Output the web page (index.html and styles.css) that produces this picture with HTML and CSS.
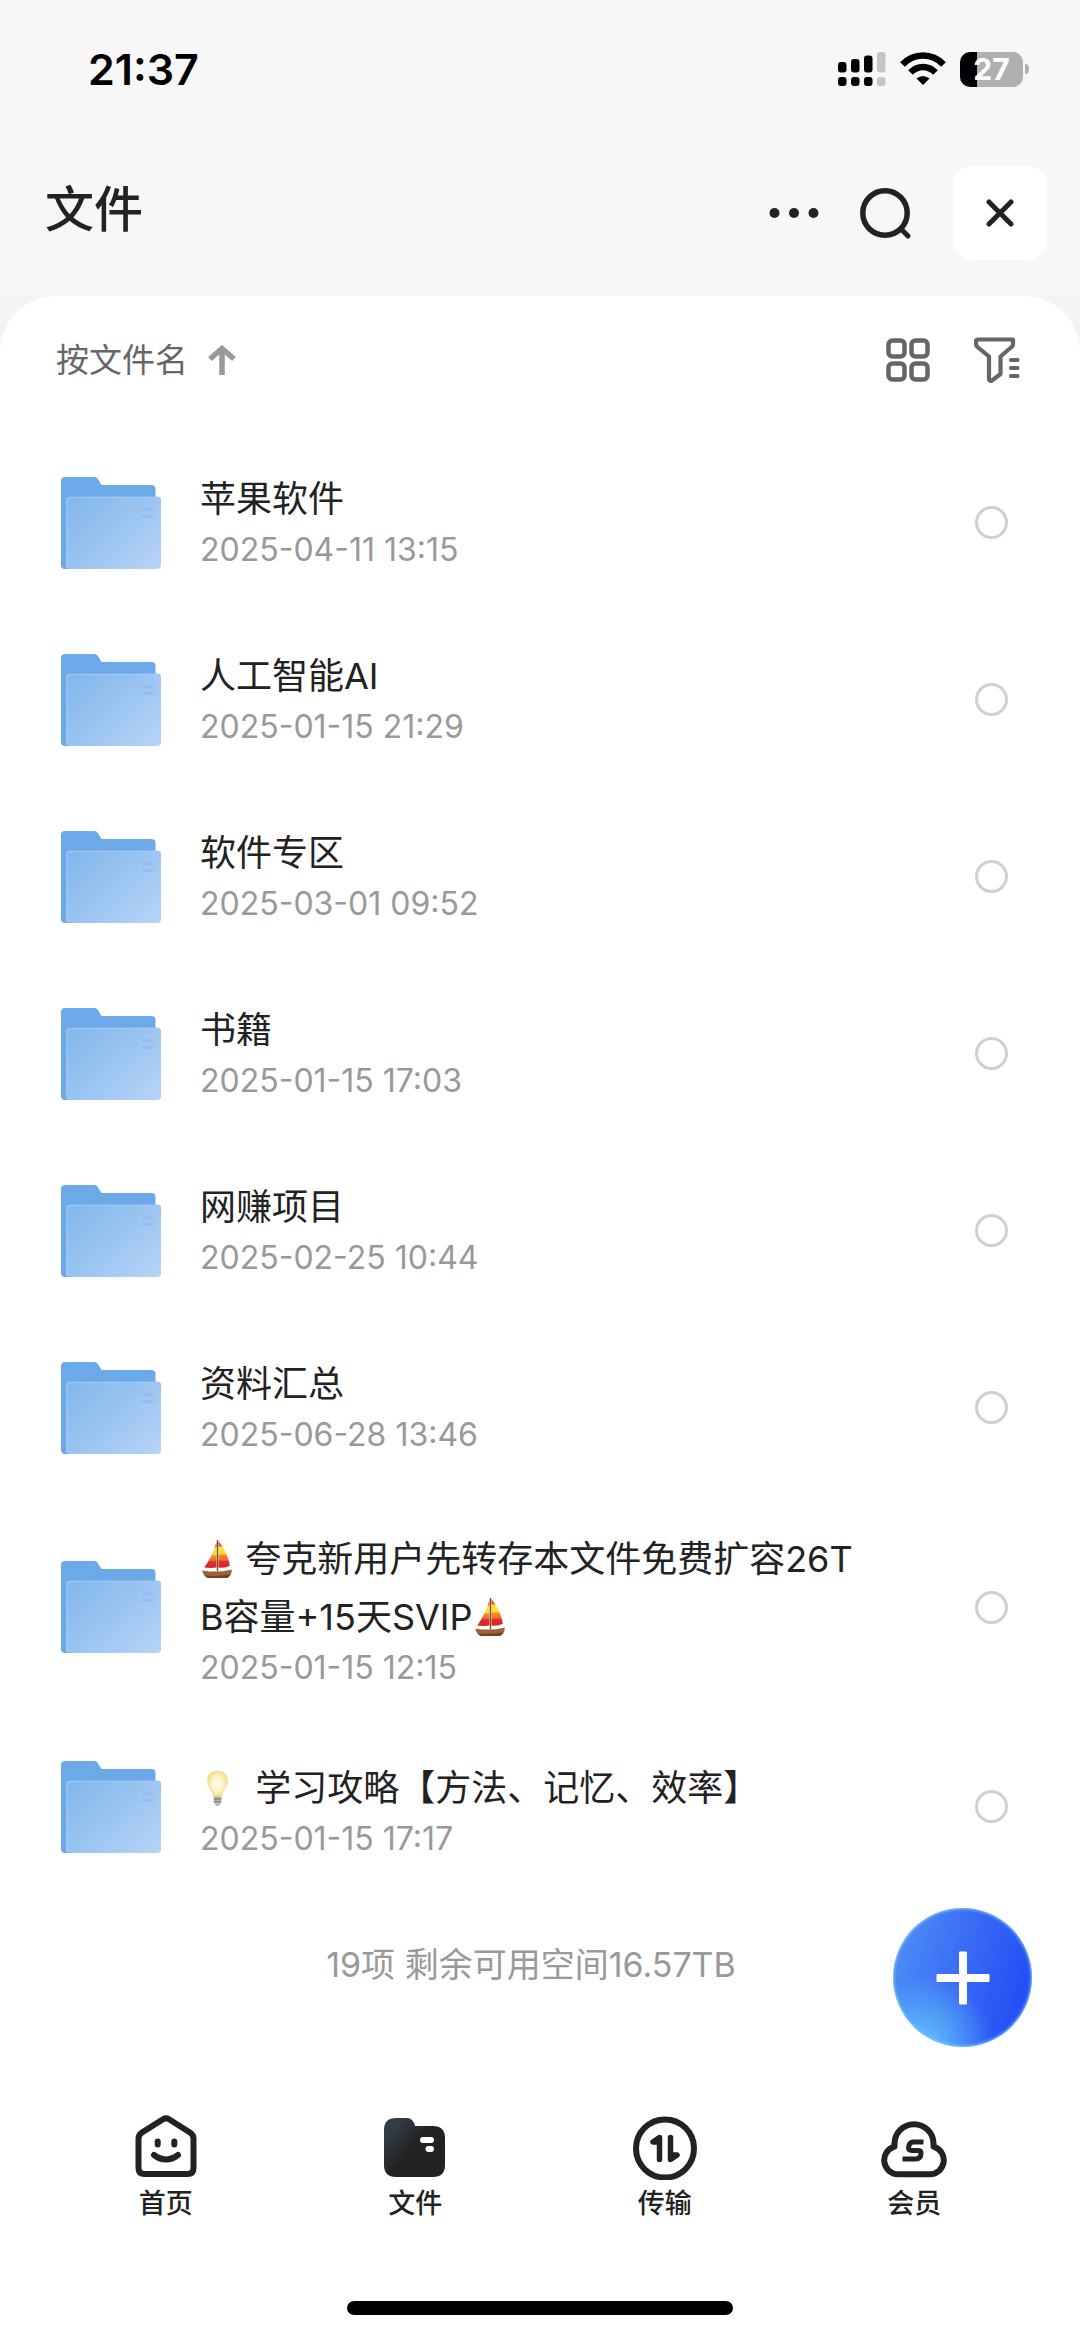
FILE: index.html
```html
<!DOCTYPE html>
<html lang="zh-CN">
<head>
<meta charset="utf-8">
<meta name="viewport" content="width=device-width, initial-scale=1">
<title>文件</title>
<link rel="stylesheet" href="styles.css">
</head>
<body>
<svg class="defs" aria-hidden="true">
  <defs>
    <linearGradient id="folder-front" x1="0" y1="0.1" x2="1" y2="0.9">
      <stop offset="0" stop-color="#83b8ec"/><stop offset="0.45" stop-color="#98c3f0"/><stop offset="1" stop-color="#b5d2f7"/>
    </linearGradient>
    <linearGradient id="nav-folder" x1="0" y1="0" x2="0.7" y2="0.6">
      <stop offset="0" stop-color="#353e47"/><stop offset="0.25" stop-color="#333b43"/><stop offset="0.75" stop-color="#222"/>
    </linearGradient>
    <linearGradient id="sail" x1="0" y1="0" x2="0" y2="1">
      <stop offset="0" stop-color="#e8402a"/><stop offset="0.18" stop-color="#ee5a3a"/><stop offset="0.24" stop-color="#ffe838"/><stop offset="0.48" stop-color="#fdd835"/><stop offset="0.54" stop-color="#f4892b"/><stop offset="0.7" stop-color="#f0702b"/><stop offset="0.76" stop-color="#e0302a"/><stop offset="1" stop-color="#d81f2a"/>
    </linearGradient>
    <radialGradient id="glow">
      <stop offset="0" stop-color="#fffdf0"/><stop offset="0.5" stop-color="#fff6cc"/><stop offset="1" stop-color="#f6dc8c"/>
    </radialGradient>
    <symbol id="folder" viewBox="0 0 100 92">
      <path fill="#6ba9e8" d="M4 0h29q3 0 4.500 3l3 5h50q4 0 4 4V92H4q-4 0-4-4V4q0-4 4-4z"/>
      <rect x="5" y="19.500" width="95" height="72.500" rx="4" fill="url(#folder-front)"/>
      <path d="M6 91V23.500q0-3 3-3h88q2 0 2.500 2" fill="none" stroke="#a0c8f2" stroke-width="1.200"/>
      <path d="M81 32.500h11M81 39.500h11" stroke="#93bbec" stroke-width="2.500"/>
    </symbol>
    <symbol id="boat" viewBox="0 0 36 40">
      <path fill="url(#sail)" d="M17 2Q12 18 4 29q7 1 13 0z"/>
      <path fill="url(#sail)" d="M19 1q10 12 12 26-5 3-12 2z"/>
      <path stroke="#75543a" stroke-width="1.500" d="M18 0v33"/>
      <path fill="#9b6338" d="M2 32q16 3 31-1 0 7-5 9H8q-5-2-6-8z"/>
      <path fill="#6e4224" d="M5 37q12 2 26-1-1 3-3 4H8q-2-1-3-3z"/>
    </symbol>
    <symbol id="bulb" viewBox="0 0 36 40">
      <path fill="url(#glow)" stroke="#f0dfa8" d="M18 2C11 2 7.500 6.500 7.500 12.500c0 7 5.500 9.500 6 16.500h9c.5-7 6-9.500 6-16.500C28.500 6.500 25 2 18 2z"/>
      <path fill="#b9b9b9" d="M14 29h8v6l-2.500 4h-3L14 35z"/>
      <path d="M14 31.500h8M14 34.500h8" stroke="#777" stroke-width="1.200"/>
    </symbol>
  </defs>
</svg>

<div class="app">
  <div class="status">
    <time class="clock">21:37</time>
    <div class="status-icons">
      <svg width="48" height="34" viewBox="0 0 48 34" aria-label="信号">
        <rect x="0" y="10" width="8.500" height="10.500" rx="3"/><rect x="13" y="7" width="8.500" height="13.500" rx="3"/><rect x="26" y="3.500" width="8.500" height="17" rx="3"/><rect x="39" y="0" width="8.500" height="20.500" rx="3" fill="#c5c5c5"/>
        <rect x="0" y="25" width="8.500" height="9" rx="3"/><rect x="13" y="25" width="8.500" height="9" rx="3"/><rect x="26" y="25" width="8.500" height="9" rx="3"/><rect x="39" y="25" width="8.500" height="9" rx="3" fill="#c5c5c5"/>
      </svg>
      <svg width="46" height="34" viewBox="0 0 46 34" aria-label="无线网络">
        <path fill="none" stroke="#000" stroke-width="6.500" d="M2.500 12.500Q11 3.500 23 3.500t20.500 9M10.500 20.500Q16 15 23 15t12.500 5.500"/>
        <path d="M23 33l-6.500-6.500Q23 21.500 29.500 26.500z"/>
      </svg>
      <div class="battery"><span class="battery-level">27</span><span class="battery-tip"></span></div>
    </div>
  </div>

  <header class="header">
    <h1 class="title">文件</h1>
    <div class="header-actions">
      <button class="icon-button" aria-label="更多"><svg width="50" height="12" viewBox="0 0 50 12" fill="#222"><circle cx="5.500" cy="6" r="5"/><circle cx="25" cy="6" r="5"/><circle cx="44.500" cy="6" r="5"/></svg></button>
      <button class="icon-button" aria-label="搜索"><svg width="54" height="54" viewBox="0 0 54 54" fill="none" stroke="#222" stroke-width="5.500"><circle cx="26" cy="27" r="22.200"/><path d="M42 43l7 7" stroke-linecap="round" stroke-width="5"/></svg></button>
      <button class="close-button" aria-label="关闭"><svg width="28" height="28" viewBox="0 0 28 28" stroke="#222" stroke-width="5" stroke-linecap="round"><path d="M3 3l22 22M25 3L3 25"/></svg></button>
    </div>
  </header>

  <main class="panel">
    <div class="toolbar">
      <button class="sort-button">按文件名
        <svg width="28" height="30" viewBox="0 0 28 30" fill="none" stroke="#999" stroke-width="5.500"><path d="M14 30V5M2 14L14 3.500 26 14"/></svg>
      </button>
      <div class="view-actions">
        <button class="icon-button" aria-label="网格视图"><svg width="44" height="44" viewBox="0 0 44 44" fill="none" stroke="#666" stroke-width="4.500"><rect x="2.500" y="2.500" width="16" height="16" rx="4"/><rect x="25.500" y="2.500" width="16" height="16" rx="4"/><rect x="2.500" y="25.500" width="16" height="16" rx="4"/><rect x="25.500" y="25.500" width="16" height="16" rx="4"/></svg></button>
        <button class="icon-button" aria-label="筛选"><svg width="46" height="46" viewBox="0 0 46 46" fill="none" stroke="#666" stroke-width="4.200" stroke-linejoin="round" stroke-linecap="round"><path d="M4 2.500h35v4.500q0 2-1.500 3L26.500 19.500V37l-8.500 6.500q-2 1-3-1V19.500L3.500 10Q2 9 2 7V4q0-1.500 2-1.500z"/><path d="M37 23h6.500M37 31h6.500M37 39h6.500"/></svg></button>
      </div>
    </div>

    <ul class="files">
      <li><label class="file"><svg class="folder"><use href="#folder"/></svg><span class="info"><span class="name">苹果软件</span><time class="date">2025-04-11 13:15</time></span><input class="pick" type="checkbox"></label></li>
      <li><label class="file"><svg class="folder"><use href="#folder"/></svg><span class="info"><span class="name">人工智能AI</span><time class="date">2025-01-15 21:29</time></span><input class="pick" type="checkbox"></label></li>
      <li><label class="file"><svg class="folder"><use href="#folder"/></svg><span class="info"><span class="name">软件专区</span><time class="date">2025-03-01 09:52</time></span><input class="pick" type="checkbox"></label></li>
      <li><label class="file"><svg class="folder"><use href="#folder"/></svg><span class="info"><span class="name">书籍</span><time class="date">2025-01-15 17:03</time></span><input class="pick" type="checkbox"></label></li>
      <li><label class="file"><svg class="folder"><use href="#folder"/></svg><span class="info"><span class="name">网赚项目</span><time class="date">2025-02-25 10:44</time></span><input class="pick" type="checkbox"></label></li>
      <li><label class="file"><svg class="folder"><use href="#folder"/></svg><span class="info"><span class="name">资料汇总</span><time class="date">2025-06-28 13:46</time></span><input class="pick" type="checkbox"></label></li>
      <li><label class="file"><svg class="folder"><use href="#folder"/></svg><span class="info info-emoji"><span class="name"><svg class="emoji" role="img" aria-label="帆船"><use href="#boat"/></svg> 夸克新用户先转存本文件免费扩容26T<wbr>B容量+15天SVIP<svg class="emoji" role="img" aria-label="帆船"><use href="#boat"/></svg></span><time class="date">2025-01-15 12:15</time></span><input class="pick" type="checkbox"></label></li>
      <li><label class="file"><svg class="folder"><use href="#folder"/></svg><span class="info info-emoji"><span class="name"><svg class="emoji" role="img" aria-label="灯泡"><use href="#bulb"/></svg>&nbsp; 学习攻略【方法、记忆、效率】</span><time class="date">2025-01-15 17:17</time></span><input class="pick" type="checkbox"></label></li>
    </ul>
    <p class="summary">19项 剩余可用空间16.57TB</p>
  </main>

  <footer class="footer">
    <button class="add-button" aria-label="新建"><svg width="54" height="54" viewBox="0 0 54 54" fill="#fff"><rect x="23" y="0.500" width="8" height="53" rx="1"/><rect x="0.500" y="23" width="53" height="8" rx="1"/></svg></button>
    <nav class="tabs">
      <a class="tab" href="#home"><svg width="66" height="66" viewBox="0 0 66 66" fill="none" stroke="#222" stroke-width="6" stroke-linecap="round" stroke-linejoin="round"><path d="M30 5.300q3-1.800 6 0L57 18.500q3.500 2.300 3.500 6V54q0 6-6 6h-43q-6 0-6-6V24.500q0-3.700 3.500-6z"/><path d="M21 41q12 9 24 0"/><path d="M24.700 27.500v3M41.300 27.500v3"/></svg>首页</a>
      <a class="tab" href="#files" aria-current="page"><svg width="66" height="66" viewBox="0 0 66 66"><path fill="url(#nav-folder)" d="M14 4h11q6 0 8 8h18q12 0 12 12v27q0 12-12 12H14Q2 63 2 51V16Q2 4 14 4z"/><rect x="38" y="23" width="14" height="6" rx="3" fill="#fff"/><rect x="43.500" y="32" width="8.500" height="6" rx="3" fill="#fff"/></svg>文件</a>
      <a class="tab" href="#transfer"><svg width="66" height="66" viewBox="0 0 66 66" fill="none" stroke="#222" stroke-width="6"><circle cx="33" cy="34.500" r="29"/><g stroke-linecap="round" stroke-linejoin="round" stroke-width="5.500"><path d="M27.500 45.500V23.500L21 28h6"/><path d="M38.500 23.500v22L45 41h-6"/></g></svg>传输</a>
      <a class="tab" href="#member"><svg width="66" height="66" viewBox="0 0 66 66" fill="none" stroke="#222" stroke-width="6"><path stroke-linejoin="round" d="M17 60.200a14 14 0 0 1-3.500-27.500c0-1 0-1.500 0-3a19.500 19.500 0 0 1 39 0c0 1.500 0 2 0 3A14 14 0 0 1 49 60.200z"/><path stroke-width="5" d="M42.500 28H32.500q-3.500 0-4.500 3.500t0 4q.5 1 3 1h6q3 0 3 2.500 0 6-5.500 6H21.500"/></svg>会员</a>
    </nav>
    <div class="home-bar"></div>
  </footer>
</div>
</body>
</html>
```
FILE: styles.css
```css
* { box-sizing: border-box; }

body {
  margin: 0;
  background: #fff;
  color: #222;
  font-family: Inter, "Noto Sans CJK SC", sans-serif;
}

button {
  margin: 0;
  padding: 0;
  border: 0;
  background: none;
  color: inherit;
  font: inherit;
}

svg { display: block; flex: none; }
.defs { position: absolute; width: 0; height: 0; }

.app {
  min-height: 100vh;
  display: flex;
  flex-direction: column;
  background: linear-gradient(#f7f7f7 296px, #f4f4f4 296px, #f4f4f4 400px, #fff 400px);
}

.status {
  display: flex;
  justify-content: space-between;
  align-items: center;
  height: 138px;
  padding: 0 51px 0 88px;
}
.clock { color: #000; font-size: 43px; font-weight: 600; }
.status-icons { display: flex; align-items: center; gap: 14px; }
.battery { display: flex; align-items: center; gap: 2px; }
.battery-level {
  width: 63px;
  height: 35px;
  border-radius: 10px;
  background: linear-gradient(90deg, #000 17px, #b0b0b0 17px);
  color: #fff;
  font-size: 30px;
  font-weight: 700;
  line-height: 35px;
  text-align: center;
}
.battery-tip { width: 4px; height: 10px; border-radius: 0 6px 6px 0; background: #b0b0b0; }

.header {
  display: flex;
  justify-content: space-between;
  align-items: center;
  height: 158px;
  padding: 0 33px 8px 45px;
}
.title { margin: 0; padding-bottom: 6px; font-size: 49px; font-weight: 500; line-height: 64px; }
.header-actions { display: flex; align-items: center; gap: 40px; }
.icon-button { display: flex; }
.close-button {
  display: grid;
  place-items: center;
  width: 94px;
  height: 94px;
  border-radius: 20px;
  background: #fff;
}

.panel {
  flex: 1;
  border-radius: 56px 56px 0 0;
  background: #fff;
}
.toolbar {
  display: flex;
  justify-content: space-between;
  align-items: center;
  height: 128px;
  padding: 0 60px 0 56px;
  color: #666;
}
.sort-button { display: flex; align-items: center; gap: 20px; font-size: 33px; line-height: 48px; }
.view-actions { display: flex; align-items: center; gap: 44px; }

.files { margin: 0; padding: 10px 0 0; list-style: none; }
.file {
  display: flex;
  align-items: center;
  min-height: 177px;
  padding: 28px 72px 28px 61px;
}
.folder { width: 100px; height: 92px; }
.info { flex: 1; margin: 0 120px 0 39px; padding-bottom: 4px; }
.info-emoji { padding: 6px 0 0; }
.name { display: block; font-size: 36px; line-height: 58px; }
.date { display: block; color: #999; font-size: 32px; line-height: 44px; }
.emoji { display: inline-block; width: 35px; height: 38px; vertical-align: -6px; }
.pick {
  appearance: none;
  width: 33px;
  height: 33px;
  margin: 0;
  border: 3px solid #d0d0d0;
  border-radius: 50%;
}

.summary {
  margin: 0;
  padding: 46px 18px 0 0;
  color: #999;
  font-size: 34px;
  line-height: 48px;
  text-align: center;
}

.footer { position: relative; padding: 0 41px 22px; background: #fff; }
.add-button {
  position: absolute;
  right: 48px;
  bottom: 290px;
  display: grid;
  place-items: center;
  width: 139px;
  height: 139px;
  border-radius: 50%;
  background:
    radial-gradient(circle at 22% 100%, #62c4fb 0, #62c4fb00 40%),
    linear-gradient(105deg, #4b8af6 10%, #3b6ef4 45%, #2450f4 85%);
  box-shadow: inset 0 0 3px 1px #80cdf8;
}
.tabs { display: flex; }
.tab {
  flex: 1;
  display: flex;
  flex-direction: column;
  align-items: center;
  gap: 4px;
  color: #222;
  font-size: 27px;
  font-weight: 500;
  line-height: 40px;
  text-decoration: none;
}
.home-bar {
  width: 386px;
  height: 14px;
  margin: 77px auto 0;
  border-radius: 7px;
  background: #000;
}
```
